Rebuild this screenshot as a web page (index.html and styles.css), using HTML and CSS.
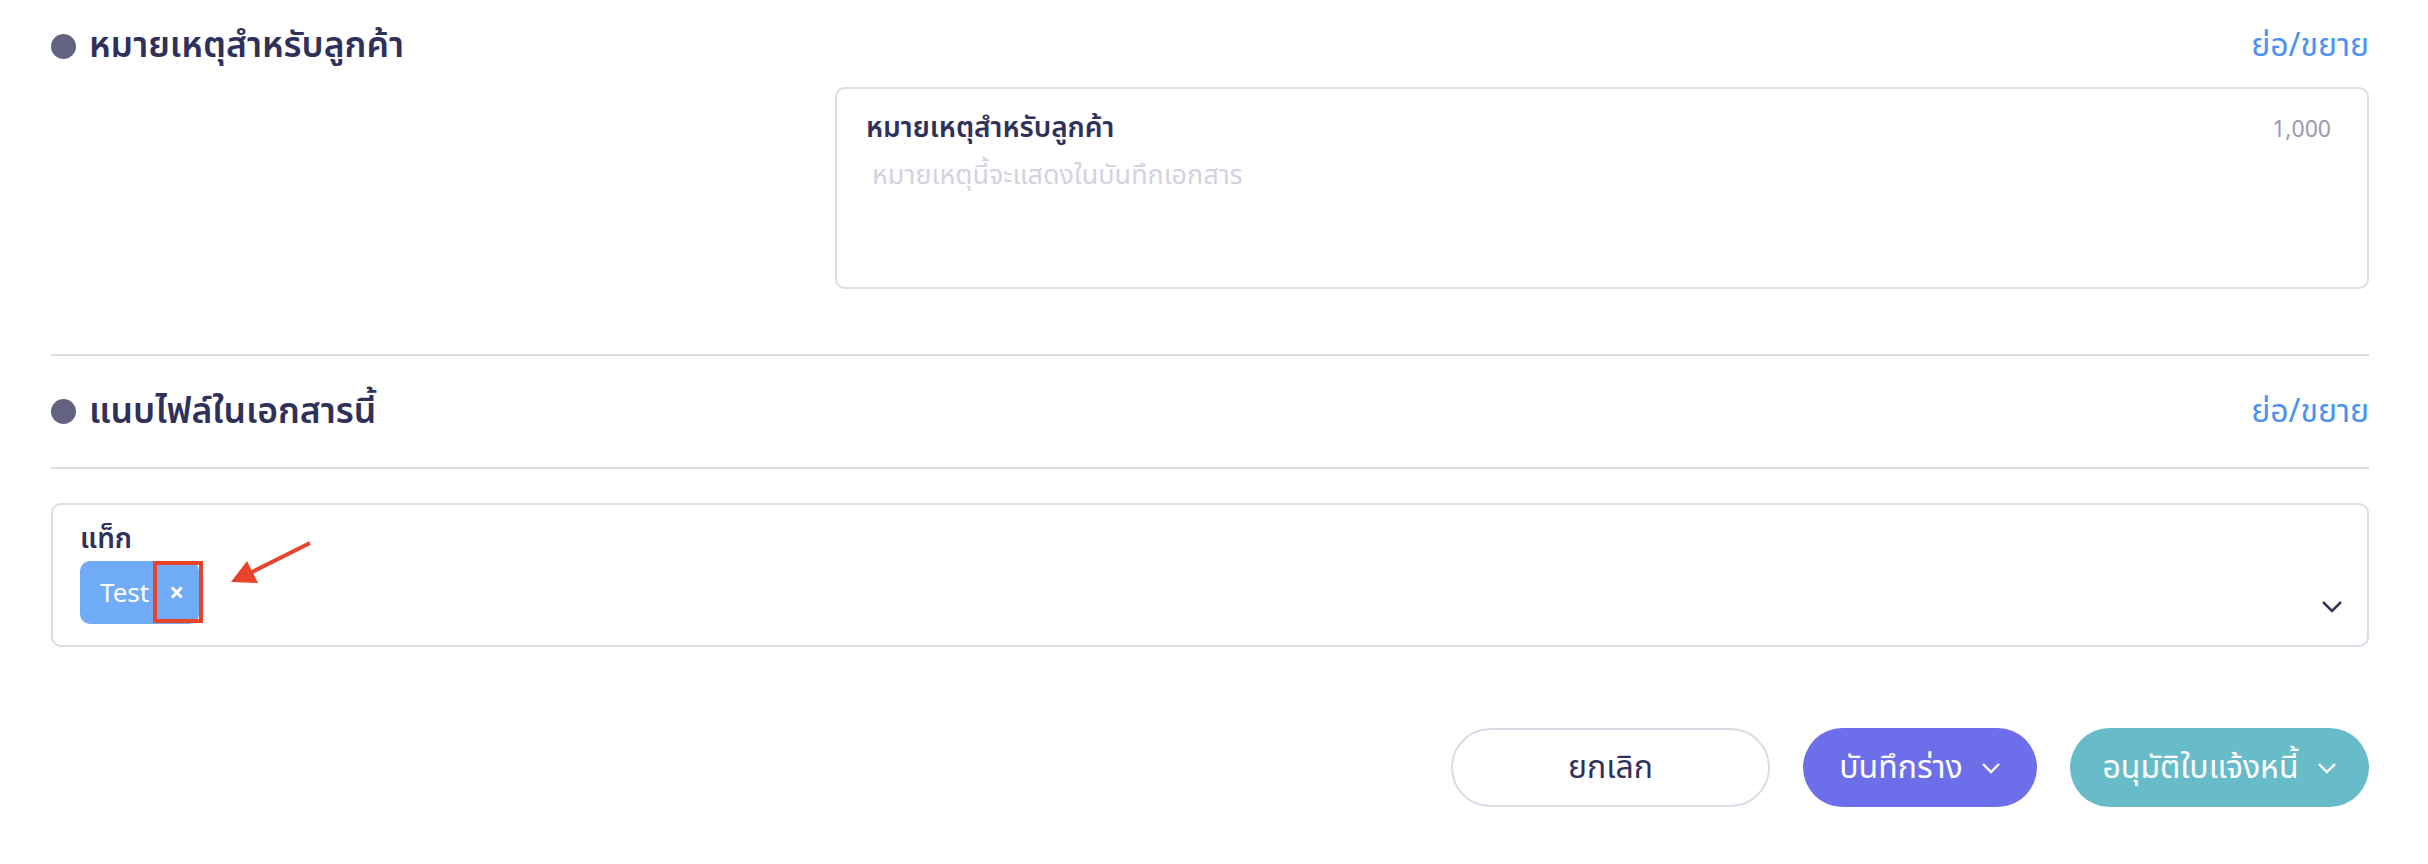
FILE: index.html
```html
<!DOCTYPE html>
<html>
  <head>
    <meta charset="utf-8">
    <title>หมายเหตุ</title>
    <link rel="stylesheet" href="styles.css">
  </head>
  <body>
  <div id="page">

    <div class="section-head first">
      <h2 class="section-title"><span class="dot"></span>หมายเหตุสำหรับลูกค้า</h2>
      <a class="toggle" href="#">ย่อ/ขยาย</a>
    </div>
    <div class="note-row">
      <div class="note-box">
        <div class="note-top">
          <label class="field-label">หมายเหตุสำหรับลูกค้า</label>
          <span class="counter">1,000</span>
        </div>
        <div class="placeholder">หมายเหตุนี้จะแสดงในบันทึกเอกสาร</div>
      </div>
    </div>

    <div class="divider"></div>

    <div class="section-head second">
      <h2 class="section-title"><span class="dot"></span>แนบไฟล์ในเอกสารนี้</h2>
      <a class="toggle" href="#">ย่อ/ขยาย</a>
    </div>

    <div class="divider"></div>

    <div class="tag-box">
      <div class="tag-inner">
        <label class="field-label small">แท็ก</label>
        <div class="tags">
          <span class="tag">Test <span class="tag-x">×<span class="mark"></span></span></span>
          <svg class="arrow" width="90" height="52" viewBox="0 0 90 52">
            <line x1="84" y1="6" x2="24" y2="36" stroke="#e8432b" stroke-width="4"/>
            <polygon points="5,45 21,24 32,46" fill="#e8432b"/>
          </svg>
        </div>
      </div>
      <svg class="chev" width="22" height="14" viewBox="0 0 22 14">
        <polyline points="2,2 11,11 20,2" fill="none" stroke="#34345c" stroke-width="2.6"/>
      </svg>
    </div>

    <div class="actions">
      <button class="btn btn-cancel">ยกเลิก</button>
      <button class="btn btn-draft">บันทึกร่าง
        <svg width="20" height="12" viewBox="0 0 20 12"><polyline points="2,2 10,10 18,2" fill="none" stroke="#fff" stroke-width="2.4"/></svg>
      </button>
      <button class="btn btn-approve">อนุมัติใบแจ้งหนี้
        <svg width="20" height="12" viewBox="0 0 20 12"><polyline points="2,2 10,10 18,2" fill="none" stroke="#fff" stroke-width="2.4"/></svg>
      </button>
    </div>

  </div>
  </body>
</html>
```

FILE: styles.css
```css
      body {
	  font-family: "Noto Sans Thai", "Noto Sans", sans-serif;
	  margin: 0;
	  background: #fff;
	  color: #31315a;
      }
      #page {
	  padding: 15px 59px 0 51px;
      }
      .section-head {
	  display: flex;
	  align-items: center;
	  justify-content: space-between;
      }
      .section-head.first {
	  height: 62px;
      }
      .section-head.second {
	  height: 111px;
      }
      .section-title {
	  display: flex;
	  align-items: center;
	  margin: 0;
	  font-size: 35.5px;
	  font-weight: 600;
	  color: #30315a;
      }
      .dot {
	  width: 25px;
	  height: 25px;
	  border-radius: 50%;
	  background: #64637f;
	  margin-right: 13px;
      }
      .toggle {
	  color: #4b91f1;
	  font-size: 32px;
	  text-decoration: none;
      }
      .note-row {
	  display: flex;
	  justify-content: flex-end;
	  padding-top: 10px;
	  margin-bottom: 65px;
      }
      .note-box {
	  width: 1534px;
	  height: 202px;
	  box-sizing: border-box;
	  border: 2px solid #dcdbe6;
	  border-radius: 10px;
	  padding: 18px 36px 0 29px;
      }
      .note-top {
	  display: flex;
	  justify-content: space-between;
	  align-items: flex-start;
      }
      .field-label {
	  font-size: 28px;
	  font-weight: 600;
	  color: #30315a;
      }
      .counter {
	  font-size: 23px;
	  color: #9b9ab1;
	  padding-top: 6px;
      }
      .placeholder {
	  font-size: 27px;
	  color: #d3d2df;
	  padding-left: 6px;
	  margin-top: 5px;
      }
      .divider {
	  height: 2px;
	  background: #dcdbe6;
      }
      .tag-box {
	  margin-top: 34px;
	  height: 144px;
	  box-sizing: border-box;
	  border: 2px solid #dcdbe6;
	  border-radius: 10px;
	  display: flex;
	  justify-content: space-between;
	  align-items: center;
	  padding: 0 24px 0 27px;
      }
      .tag-inner {
	  display: flex;
	  flex-direction: column;
	  align-items: flex-start;
	  margin-top: -9px;
      }
      .field-label.small {
	  font-size: 28px;
      }
      .tags {
	  position: relative;
	  display: flex;
      }
      .tag {
	  display: flex;
	  align-items: center;
	  height: 63px;
	  padding: 0 15px 0 20px;
	  background: #70abf8;
	  border-radius: 10px;
	  color: #fff;
	  font-family: "Noto Sans", sans-serif;
	  font-size: 26px;
      }
      .tag-x {
	  position: relative;
	  margin-left: 20px;
	  font-size: 26px;
	  font-weight: 700;
      }
      .mark {
	  position: absolute;
	  left: -16px;
	  top: -13px;
	  width: 42px;
	  height: 54px;
	  border: 4px solid #e8432b;
      }
      .arrow {
	  position: absolute;
	  left: 146px;
	  top: -24px;
      }
      .chev {
	  align-self: flex-end;
	  margin-bottom: 31px;
      }
      .actions {
	  display: flex;
	  justify-content: flex-end;
	  gap: 33px;
	  margin-top: 81px;
      }
      .btn {
	  height: 79px;
	  border-radius: 40px;
	  font-family: "Noto Sans Thai", "Noto Sans", sans-serif;
	  font-size: 32px;
	  border: none;
	  display: flex;
	  align-items: center;
	  justify-content: center;
	  gap: 18px;
	  color: #fff;
      }
      .btn-cancel {
	  width: 319px;
	  background: #fff;
	  border: 2px solid #dcdbe6;
	  color: #31315a;
      }
      .btn-draft {
	  width: 234px;
	  background: #6c6eea;
      }
      .btn-approve {
	  width: 299px;
	  background: #68bcc9;
      }
```
